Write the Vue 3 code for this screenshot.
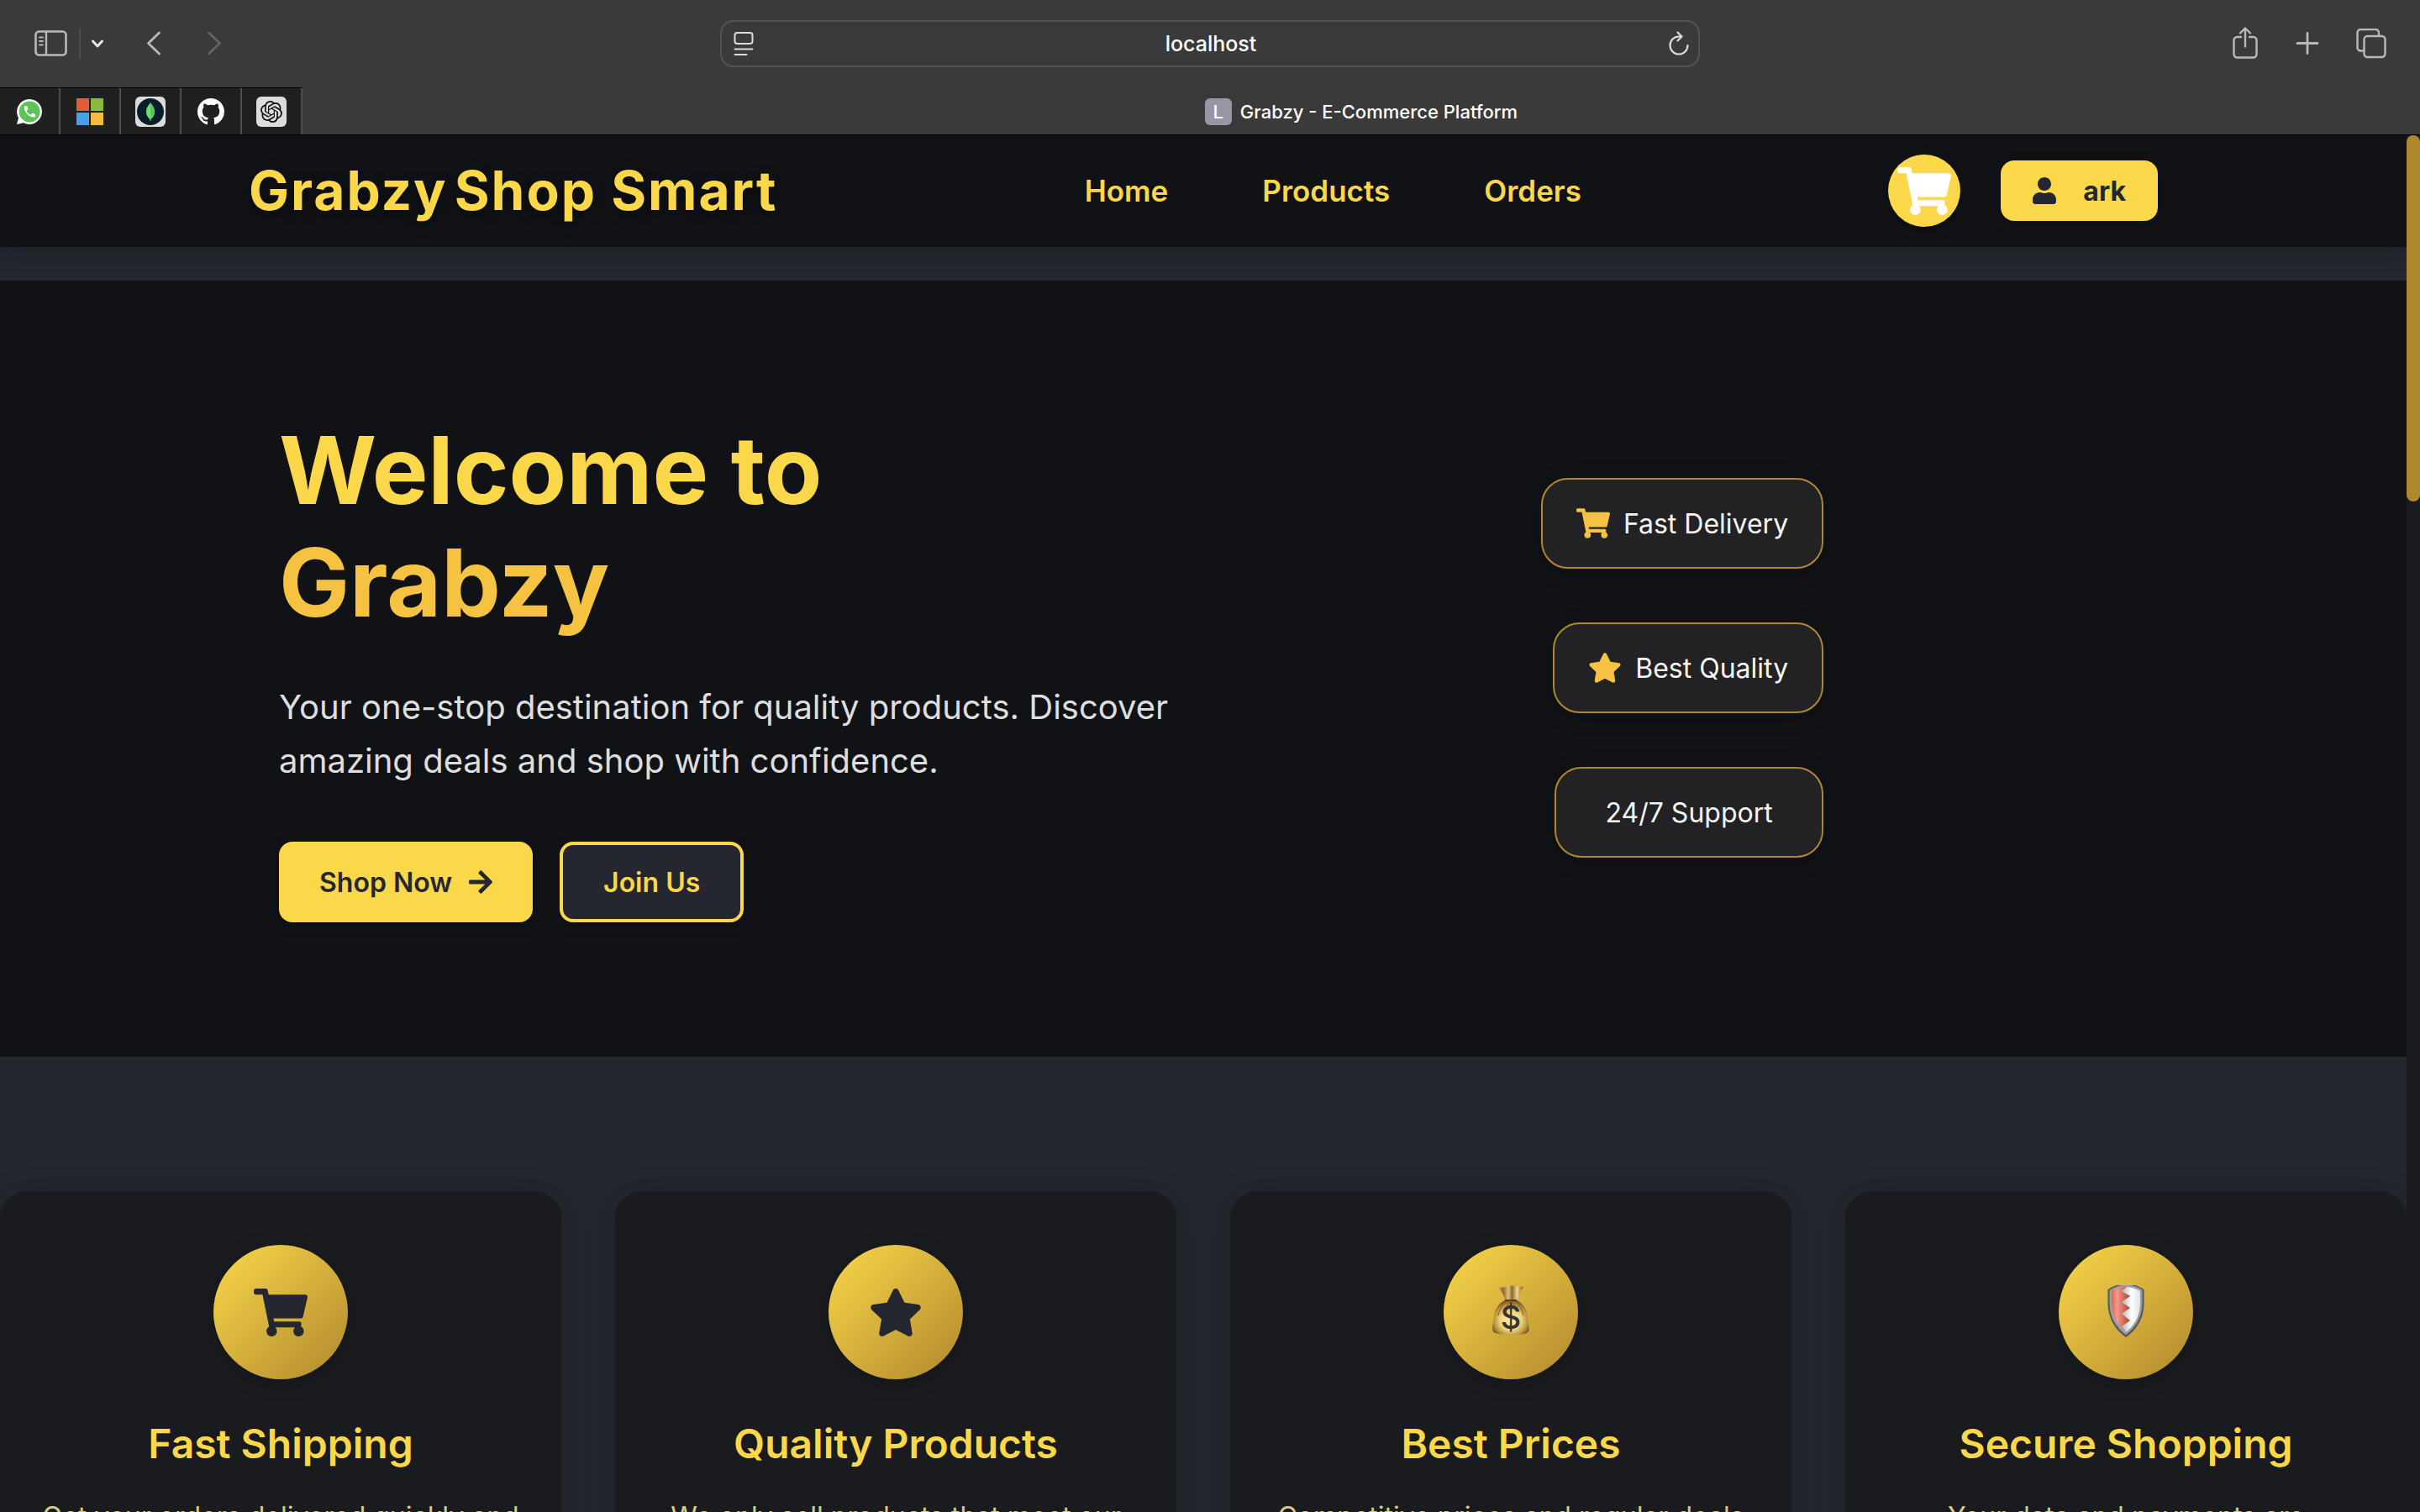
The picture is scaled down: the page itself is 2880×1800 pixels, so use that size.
<script setup>
import { ref } from 'vue'

const address = ref('localhost')

const icons = {
  cart: {
    viewBox: '0 0 576 512',
    path: 'M528.12 301.319l47.273-208C578.806 78.301 567.391 64 551.99 64H159.208l-9.166-44.81C147.758 8.021 137.93 0 126.529 0H24C10.745 0 0 10.745 0 24v16c0 13.255 10.745 24 24 24h69.883l70.248 343.435C147.325 417.1 136 435.222 136 456c0 30.928 25.072 56 56 56s56-25.072 56-56c0-15.674-6.447-29.835-16.824-40h209.647C430.447 426.165 424 440.326 424 456c0 30.928 25.072 56 56 56s56-25.072 56-56c0-22.172-12.888-41.332-31.579-50.405l5.517-24.276c3.413-15.018-8.002-29.319-23.403-29.319H218.117l-6.545-32h293.145c11.206 0 20.92-7.754 23.403-18.681z',
  },
  star: {
    viewBox: '0 0 576 512',
    path: 'M259.3 17.8L194 150.2 47.9 171.5c-26.2 3.8-36.7 36.1-17.7 54.6l105.7 103-25 145.5c-4.5 26.3 23.2 46 46.4 33.7L288 439.6l130.7 68.7c23.2 12.2 50.9-7.4 46.4-33.7l-25-145.5 105.7-103c19-18.5 8.5-50.8-17.7-54.6L382 150.2 316.7 17.8c-11.7-23.6-45.6-23.9-57.4 0z',
  },
}

const links = ['Home', 'Products', 'Orders']

const perks = [
  { label: 'Fast Delivery', icon: icons.cart },
  { label: 'Best Quality', icon: icons.star },
  { label: '24/7 Support', icon: null },
]

const features = [
  { title: 'Fast Shipping', icon: 'cart', text: 'Get your orders delivered quickly and' },
  { title: 'Quality Products', icon: 'star', text: 'We only sell products that meet our' },
  { title: 'Best Prices', icon: 'bag', text: 'Competitive prices and regular deals' },
  { title: 'Secure Shopping', icon: 'shield', text: 'Your data and payments are' },
]
</script>

<template>
  <div class="window">
    <div class="toolbar">
      <div class="tools tools-left">
        <button class="tool" aria-label="Sidebar">
          <svg width="40" height="32" viewBox="0 0 40 32" fill="none" stroke="#b9b9b9">
            <rect x="2.500" y="1.500" width="36" height="28" rx="4" stroke-width="2.600" />
            <path d="M15 2v27" stroke-width="2.400" />
            <path d="M7 8.500h4M7 13h4M7 17.500h4" stroke-width="1.800" stroke-linecap="round" />
          </svg>
        </button>
        <span class="divider"></span>
        <button class="tool tool-menu" aria-label="Tab groups">
          <svg width="16" height="12" viewBox="0 0 16 12" fill="none" stroke="#e6e6e6" stroke-width="3" stroke-linecap="round" stroke-linejoin="round"><path d="M2.500 3l5.500 6 5.500-6" /></svg>
        </button>
        <button class="tool tool-back" aria-label="Back">
          <svg width="18" height="30" viewBox="0 0 18 30" fill="none" stroke="#b9b9b9" stroke-width="2.800" stroke-linecap="round" stroke-linejoin="round"><path d="M15.500 2L2.500 14.500l13 12.500" /></svg>
        </button>
        <button class="tool tool-forward" aria-label="Forward">
          <svg width="18" height="30" viewBox="0 0 18 30" fill="none" stroke="#636363" stroke-width="2.800" stroke-linecap="round" stroke-linejoin="round"><path d="M2.500 2L15.500 14.500l-13 12.500" /></svg>
        </button>
      </div>
      <div class="address">
        <svg width="24" height="30" viewBox="0 0 24 30" fill="none" stroke="#dcdcdc" stroke-width="2" stroke-linecap="round">
          <rect x="1.500" y="2" width="21" height="13" rx="3" />
          <path d="M1.500 21.500h21M1.500 28h14" />
        </svg>
        <input v-model="address" type="text" aria-label="Address" />
        <button class="tool" aria-label="Reload">
          <svg width="26" height="30" viewBox="0 0 26 30" fill="none" stroke="#dcdcdc" stroke-width="2.200" stroke-linecap="round" stroke-linejoin="round">
            <path d="M13 6.500a10.500 10.500 0 1 0 10.500 10.500M13 6.500h3M11.500 1.500l5 5-5 5" />
          </svg>
        </button>
      </div>
      <div class="tools tools-right">
        <button class="tool" aria-label="Share">
          <svg width="32" height="40" viewBox="0 0 32 40" fill="none" stroke="#b9b9b9" stroke-width="2.400" stroke-linecap="round" stroke-linejoin="round">
            <path d="M11 12H6.500a4 4 0 0 0-4 4v16.500a4 4 0 0 0 4 4h19a4 4 0 0 0 4-4V16a4 4 0 0 0-4-4H21" />
            <path d="M16 23.500V2M10 7.500L16 1.500l6 6" />
          </svg>
        </button>
        <button class="tool" aria-label="New tab">
          <svg width="28" height="28" viewBox="0 0 28 28" fill="none" stroke="#b9b9b9" stroke-width="2.800" stroke-linecap="round"><path d="M14 1.500v24M2 13.500h24" /></svg>
        </button>
        <button class="tool" aria-label="Tab overview">
          <svg width="36" height="36" viewBox="0 0 36 36" fill="none" stroke="#b9b9b9" stroke-width="2.400" stroke-linejoin="round">
            <path d="M9 26.500H5.500a4 4 0 0 1-4-4V5a4 4 0 0 1 4-4H23a4 4 0 0 1 4 4v3.500" />
            <rect x="9.500" y="9" width="25" height="25" rx="4" />
          </svg>
        </button>
      </div>
    </div>

    <div class="tabs">
      <div class="pinned">
        <button class="pin" aria-label="WhatsApp">
          <svg width="32" height="32" viewBox="0 0 32 32">
            <path d="M16 1a15 15 0 1 1-7 28.300L1 31l2-7.600A15 15 0 0 1 16 1z" fill="#fff" />
            <circle cx="16.200" cy="16" r="12.500" fill="#5ac456" />
            <path transform="translate(7.500 7) scale(.74)" fill="#fff" d="M6.620 10.790c1.440 2.830 3.760 5.140 6.590 6.590l2.200-2.200c.27-.27.67-.36 1.020-.24 1.120.37 2.330.57 3.570.57.55 0 1 .45 1 1V20c0 .55-.45 1-1 1-9.390 0-17-7.610-17-17 0-.55.45-1 1-1h3.500c.55 0 1 .45 1 1 0 1.250.2 2.450.57 3.570.11.35.03.74-.25 1.020l-2.200 2.200z" />
          </svg>
        </button>
        <button class="pin" aria-label="Microsoft">
          <svg width="32" height="32" viewBox="0 0 32 32">
            <path d="M0 0h15v15H0z" fill="#e35d36" /><path d="M17 0h15v15H17z" fill="#8cb937" />
            <path d="M0 17h15v15H0z" fill="#48a1e8" /><path d="M17 17h15v15H17z" fill="#f5bb41" />
          </svg>
        </button>
        <button class="pin" aria-label="MongoDB">
          <svg width="36" height="36" viewBox="0 0 36 36">
            <rect width="36" height="36" rx="6" fill="#dcdcdc" />
            <circle cx="18" cy="18" r="16" fill="#081e2b" />
            <path d="M18 7c1 2.500 5 5 5 11 0 5-3 7.500-4.300 8.700L18.400 29h-.8l-.3-2.300C16 25.500 13 23 13 18c0-6 4-8.500 5-11z" fill="#6de068" />
            <path d="M18 7c1 2.500 5 5 5 11 0 5-3 7.500-4.300 8.700L18 17z" fill="#58c55a" />
          </svg>
        </button>
        <button class="pin" aria-label="GitHub">
          <svg width="32" height="32" viewBox="0 0 16 16" fill="#fff">
            <path d="M8 0C3.580 0 0 3.580 0 8c0 3.540 2.290 6.530 5.470 7.590.4.070.55-.17.55-.38 0-.19-.01-.82-.01-1.490-2.010.37-2.530-.49-2.690-.94-.09-.23-.48-.94-.82-1.130-.28-.15-.68-.52-.01-.53.63-.01 1.080.58 1.230.82.72 1.210 1.870.87 2.330.66.070-.52.28-.87.51-1.070-1.780-.2-3.640-.89-3.640-3.950 0-.87.31-1.590.82-2.150-.08-.2-.36-1.020.08-2.120 0 0 .67-.21 2.200.82.64-.18 1.320-.27 2-.27.68 0 1.360.09 2 .27 1.530-1.040 2.200-.82 2.200-.82.44 1.100.16 1.920.08 2.120.51.56.82 1.270.82 2.150 0 3.070-1.870 3.750-3.650 3.950.29.25.54.73.54 1.480 0 1.070-.01 1.930-.01 2.200 0 .21.15.46.55.38A8.013 8.013 0 0016 8c0-4.420-3.580-8-8-8z" />
          </svg>
        </button>
        <button class="pin" aria-label="ChatGPT">
          <svg width="36" height="36" viewBox="0 0 36 36">
            <rect width="36" height="36" rx="6" fill="#dcdcdc" />
            <path transform="translate(5 5) scale(1.08)" fill="#111" d="M22.2819 9.8211a5.9847 5.9847 0 0 0-.5157-4.9108 6.0462 6.0462 0 0 0-6.5098-2.9A6.0651 6.0651 0 0 0 4.9807 4.1818a5.9847 5.9847 0 0 0-3.9977 2.9 6.0462 6.0462 0 0 0 .7427 7.0966 5.98 5.98 0 0 0 .511 4.9107 6.051 6.051 0 0 0 6.5146 2.9001A5.9847 5.9847 0 0 0 13.2599 24a6.0557 6.0557 0 0 0 5.7718-4.2058 5.9894 5.9894 0 0 0 3.9977-2.9001 6.0557 6.0557 0 0 0-.7475-7.073zm-9.022 12.6081a4.4755 4.4755 0 0 1-2.8764-1.0408l.1419-.0804 4.7783-2.7582a.7948.7948 0 0 0 .3927-.6813v-6.7369l2.02 1.1686a.071.071 0 0 1 .038.052v5.5826a4.504 4.504 0 0 1-4.4945 4.4944zm-9.6607-4.1254a4.4708 4.4708 0 0 1-.5346-3.0137l.142.0852 4.783 2.7582a.7712.7712 0 0 0 .7806 0l5.8428-3.3685v2.3324a.0804.0804 0 0 1-.0332.0615L9.74 19.9502a4.4992 4.4992 0 0 1-6.1408-1.6464zM2.3408 7.8956a4.485 4.485 0 0 1 2.3655-1.9728V11.6a.7664.7664 0 0 0 .3879.6765l5.8144 3.3543-2.0201 1.1685a.0757.0757 0 0 1-.071 0l-4.8303-2.7865A4.504 4.504 0 0 1 2.3408 7.872zm16.5963 3.8558L13.1038 8.364 15.1192 7.2a.0757.0757 0 0 1 .071 0l4.8303 2.7913a4.4944 4.4944 0 0 1-.6765 8.1042v-5.6772a.79.79 0 0 0-.407-.667zm2.0107-3.0231l-.142-.0852-4.7735-2.7818a.7759.7759 0 0 0-.7854 0L9.409 9.2297V6.8974a.0662.0662 0 0 1 .0284-.0615l4.8303-2.7866a4.4992 4.4992 0 0 1 6.6802 4.66zM8.3065 12.863l-2.02-1.1638a.0804.0804 0 0 1-.038-.0567V6.0742a4.4992 4.4992 0 0 1 7.3757-3.4537l-.142.0805L8.704 5.459a.7948.7948 0 0 0-.3927.6813zm1.0976-2.3654l2.602-1.4998 2.6069 1.4998v2.9994l-2.5974 1.4997-2.6067-1.4997Z" />
          </svg>
        </button>
      </div>
      <div class="active-tab">
        <span class="favicon">L</span>
        <span>Grabzy - E-Commerce Platform</span>
      </div>
    </div>

    <div class="viewport">
      <div class="page">
        <header class="header">
          <div class="header-inner">
            <a href="#" class="brand"><span>Grabzy</span><span>Shop Smart</span></a>
            <nav class="nav">
              <a v-for="link in links" :key="link" href="#">{{ link }}</a>
            </nav>
            <div class="account">
              <button class="cart" aria-label="Cart">
                <svg width="64" height="57" :viewBox="icons.cart.viewBox" fill="currentColor"><path :d="icons.cart.path" /></svg>
              </button>
              <button class="user">
                <svg width="28" height="32" viewBox="0 0 448 512" fill="currentColor">
                  <path d="M224 256c70.700 0 128-57.300 128-128S294.700 0 224 0 96 57.300 96 128s57.300 128 128 128zm89.600 32h-16.700c-22.200 10.200-46.900 16-72.900 16s-50.600-5.800-72.900-16h-16.700C60.200 288 0 348.200 0 422.400V464c0 26.500 21.500 48 48 48h352c26.500 0 48-21.500 48-48v-41.600c0-74.200-60.200-134.400-134.400-134.400z" />
                </svg>
                <span>ark</span>
              </button>
            </div>
          </div>
        </header>

        <main>
          <section class="hero">
            <div class="hero-inner">
              <div class="intro">
                <h1>Welcome to <span>Grabzy</span></h1>
                <p>Your one-stop destination for quality products. Discover amazing deals and shop with confidence.</p>
                <div class="actions">
                  <a href="#" class="button primary">
                    Shop Now
                    <svg width="28" height="32" viewBox="0 0 448 512" fill="currentColor">
                      <path d="M190.500 66.900l22.200-22.200c9.400-9.400 24.600-9.400 33.900 0L441 239c9.400 9.400 9.400 24.600 0 33.900L246.600 467.300c-9.400 9.400-24.600 9.400-33.900 0l-22.200-22.200c-9.500-9.500-9.300-25 .4-34.300L311.400 296H24c-13.300 0-24-10.700-24-24v-32c0-13.300 10.700-24 24-24h287.400L190.900 101.200c-9.800-9.300-10-24.800-.4-34.300z" />
                    </svg>
                  </a>
                  <a href="#" class="button secondary">Join Us</a>
                </div>
              </div>
              <ul class="perks">
                <li v-for="perk in perks" :key="perk.label">
                  <svg v-if="perk.icon" width="40" height="36" :viewBox="perk.icon.viewBox" fill="#f5c242"><path :d="perk.icon.path" /></svg>
                  <span>{{ perk.label }}</span>
                </li>
              </ul>
            </div>
          </section>

          <section class="features">
            <article v-for="feature in features" :key="feature.title" class="card">
              <div class="medal">
                <svg v-if="icons[feature.icon]" width="64" height="57" :viewBox="icons[feature.icon].viewBox" fill="#24272f"><path :d="icons[feature.icon].path" /></svg>
                <svg v-else-if="feature.icon === 'bag'" width="64" height="64" viewBox="0 0 64 64">
                  <defs>
                    <radialGradient id="sack" cx=".5" cy=".58" r=".58"><stop offset="0" stop-color="#fbf0a0" /><stop offset=".5" stop-color="#ecd67c" /><stop offset=".8" stop-color="#b9913f" /><stop offset="1" stop-color="#6f4c1e" /></radialGradient>
                    <linearGradient id="neck" x2="1"><stop offset="0" stop-color="#c9ab62" /><stop offset=".2" stop-color="#8d6529" /><stop offset=".4" stop-color="#dcc480" /><stop offset=".55" stop-color="#93692c" /><stop offset=".75" stop-color="#ead894" /><stop offset="1" stop-color="#80591f" /></linearGradient>
                  </defs>
                  <path d="M17 3c3-1 5 0 8-1s9-2 12-1 6 0 10 1c-3 5-6 10-7 15H25C24 12 21 7 17 3z" fill="url(#neck)" />
                  <path d="M25 18h14c8 4 12 11 13 20 0 7 3 13 1 17-2 3-7 4-21 4s-19-1-21-4c-2-4 0-10 1-17 1-9 5-16 13-20z" fill="url(#sack)" />
                  <path d="M25 18h14" stroke="#5e3d14" stroke-width="2" />
                  <path d="M27 20c-5 4-9 9-10 16M37 20c5 4 9 9 10 16M30 20l-3 6M34 20l3 6" stroke="#95722f" stroke-width="1.500" fill="none" />
                  <text x="32" y="52" text-anchor="middle" class="dollar">$</text>
                </svg>
                <svg v-else width="64" height="64" viewBox="0 2 64 64">
                  <defs>
                    <linearGradient id="red" x2="1"><stop offset="0" stop-color="#e0664e" /><stop offset=".3" stop-color="#f5998a" /><stop offset="1" stop-color="#ad3f2a" /></linearGradient>
                    <linearGradient id="silver" x2="1"><stop offset=".3" stop-color="#a5a9ad" /><stop offset=".7" stop-color="#fff" /><stop offset="1" stop-color="#dfe3e6" /></linearGradient>
                  </defs>
                  <path d="M32 0c8 0 15 3 21.500 7v17c0 16-8 31-21.500 40C18.500 55 10.500 40 10.500 24V7C17 3 24 0 32 0z" fill="#55595b" />
                  <path d="M32 1.500c7 0 13 2 19.500 6v16c0 15-7 28-19.500 37.500C19.500 52 12.500 39 12.500 24V8C19 4 25 1.500 32 1.500z" fill="#9a9ea0" />
                  <path d="M32 4c6 0 12 2 17 5v15c0 13-6 25-17 34C21 49 15 37 15 24V9c5-3 11-5 17-5z" fill="url(#silver)" />
                  <path d="M33 4l-6 5 10 6-10 7 10 7-10 7 10 8-10 7 6 7C21 49 15 37 15 24V9c5-3 11-5 18-5z" fill="url(#red)" />
                </svg>
              </div>
              <h3>{{ feature.title }}</h3>
              <p>{{ feature.text }}</p>
            </article>
          </section>
        </main>
      </div>
      <div class="scrollbar"><div class="thumb"></div></div>
    </div>
  </div>
</template>

<style>
body {
  background: #24272f;
}
</style>

<style scoped>
* {
  box-sizing: border-box;
}
.window {
  height: 100vh;
  display: flex;
  flex-direction: column;
  overflow: hidden;
  font-family: Inter, "Liberation Sans", sans-serif;
  background: #24272f;
}
h1, h3, p, ul {
  margin: 0;
  padding: 0;
}
a {
  text-decoration: none;
  color: inherit;
}
button {
  border: 0;
  padding: 0;
  background: none;
  font: inherit;
  color: inherit;
}
svg {
  display: block;
  flex: none;
}

/* Browser toolbar */
.toolbar {
  flex: none;
  display: grid;
  grid-template-columns: 1fr minmax(0, 1166px) 1fr;
  align-items: center;
  padding: 24px 40px;
  background: #3a3a3a;
}
.tools {
  display: flex;
  align-items: center;
}
.tools-right {
  justify-content: flex-end;
  gap: 44px;
}
.divider {
  width: 2px;
  height: 36px;
  margin-left: 14px;
  background: #4e4e4e;
}
.tool-menu {
  margin-left: 12px;
}
.tool-back {
  margin-left: 50px;
}
.tool-forward {
  margin-left: 54px;
}
.address {
  height: 56px;
  display: flex;
  align-items: center;
  padding: 0 10px 0 14px;
  border: 2px solid #545454;
  border-radius: 16px;
}
.address input {
  flex: 1;
  min-width: 0;
  border: 0;
  padding: 0;
  background: none;
  color: #fff;
  font: 500 25px Inter, "Liberation Sans", sans-serif;
  text-align: center;
}
.tabs {
  flex: none;
  display: flex;
  height: 57px;
  border-bottom: 1px solid #000;
  background: #3a3a3a;
}
.pinned {
  display: flex;
  border-top: 1px solid #000;
}
.pin {
  width: 72px;
  display: flex;
  align-items: center;
  justify-content: center;
  border-right: 2px solid #4e4e4e;
  background: #202020;
}
.active-tab {
  flex: 1;
  display: flex;
  align-items: center;
  justify-content: center;
  gap: 10px;
  padding-top: 1px;
  color: #fff;
  font-size: 22px;
  font-weight: 500;
}
.favicon {
  width: 32px;
  height: 32px;
  border-radius: 6px;
  background: #9696a5;
  text-align: center;
  line-height: 32px;
}

/* Page area */
.viewport {
  flex: 1;
  min-height: 0;
  display: flex;
}
.page {
  flex: 1;
  min-width: 0;
  overflow: hidden;
}
.scrollbar {
  width: 16px;
  background: #1a1b1f;
}
.thumb {
  height: 436px;
  border-radius: 8px;
  background: #b0882e;
}

.header {
  position: relative;
  background: #111216;
  box-shadow: 0 4px 24px rgba(17, 18, 22, 0.3);
}
.header-inner {
  max-width: 2400px;
  margin: 0 auto;
  padding: 23px 64px 24px;
  display: flex;
  align-items: center;
  justify-content: space-between;
  color: #fad849;
}
.brand {
  display: flex;
  gap: 8px;
  font-size: 64px;
  line-height: 80px;
  font-weight: 700;
  letter-spacing: 2px;
  text-shadow: 0 4px 16px rgba(0, 0, 0, 0.4);
}
.nav {
  display: flex;
  gap: 112px;
  font-size: 35px;
  font-weight: 600;
}
.account {
  display: flex;
  align-items: center;
  gap: 48px;
}
.cart {
  width: 86px;
  height: 86px;
  display: flex;
  align-items: center;
  justify-content: center;
  border-radius: 50%;
  background: #fad849;
  color: #fff;
  box-shadow: 0 4px 16px rgba(0, 0, 0, 0.2);
}
.user {
  height: 72px;
  display: flex;
  align-items: center;
  gap: 32px;
  padding: 0 38px;
  border-radius: 16px;
  background: #fad849;
  color: #24272f;
  font-size: 32px;
  font-weight: 700;
  box-shadow: 0 4px 16px rgba(0, 0, 0, 0.2);
}

.hero {
  margin-top: 40px;
  padding: 158px 0 160px;
  background: #111216;
}
.hero-inner {
  max-width: 2200px;
  margin: 0 auto;
  display: grid;
  grid-template-columns: 1fr 1fr;
  gap: 80px;
  align-items: center;
}
h1 {
  margin-bottom: 50px;
  color: #fad849;
  font-size: 112px;
  line-height: 134px;
  font-weight: 700;
}
h1 span {
  display: block;
  color: #f5c242;
}
.intro p {
  margin-bottom: 64px;
  color: #dedede;
  font-size: 40px;
  line-height: 64px;
}
.actions {
  display: flex;
  gap: 32px;
}
.button {
  height: 96px;
  display: flex;
  align-items: center;
  gap: 20px;
  padding: 0 48px;
  border-radius: 16px;
  font-size: 32px;
  font-weight: 600;
  box-shadow: 0 4px 16px rgba(0, 0, 0, 0.2);
}
.primary {
  background: #fad849;
  color: #24272f;
}
.secondary {
  border: 4px solid #fad849;
  background: #24272f;
  color: #fad849;
}
.perks {
  justify-self: center;
  display: flex;
  flex-direction: column;
  align-items: flex-end;
  gap: 64px;
  list-style: none;
}
.perks li {
  min-width: 320px;
  height: 108px;
  display: flex;
  align-items: center;
  justify-content: center;
  gap: 16px;
  padding: 0 40px;
  border: 2px solid #b0882e;
  border-radius: 32px;
  background: #222224;
  color: #f5f5f5;
  font-size: 32px;
  box-shadow: 0 4px 24px rgba(0, 0, 0, 0.2);
}

.features {
  display: grid;
  grid-template-columns: repeat(4, 1fr);
  gap: 64px;
  padding: 160px 0;
}
.card {
  display: flex;
  flex-direction: column;
  align-items: center;
  padding: 64px 48px;
  border-radius: 32px;
  background: #1a1b1f;
  text-align: center;
  box-shadow: 0 4px 32px rgba(17, 18, 22, 0.25);
}
.medal {
  width: 160px;
  height: 160px;
  display: flex;
  align-items: center;
  justify-content: center;
  margin-bottom: 48px;
  border-radius: 50%;
  background: linear-gradient(135deg, #fad849, #b0882e);
  box-shadow: 0 4px 24px rgba(0, 0, 0, 0.18);
}
.dollar {
  fill: #3a3436;
  font-size: 38px;
  font-weight: 500;
}
.card h3 {
  margin-bottom: 32px;
  color: #fad849;
  font-size: 48px;
  line-height: 58px;
  font-weight: 600;
}
.card p {
  color: #dccb82;
  font-size: 32px;
  line-height: 51px;
}
</style>
